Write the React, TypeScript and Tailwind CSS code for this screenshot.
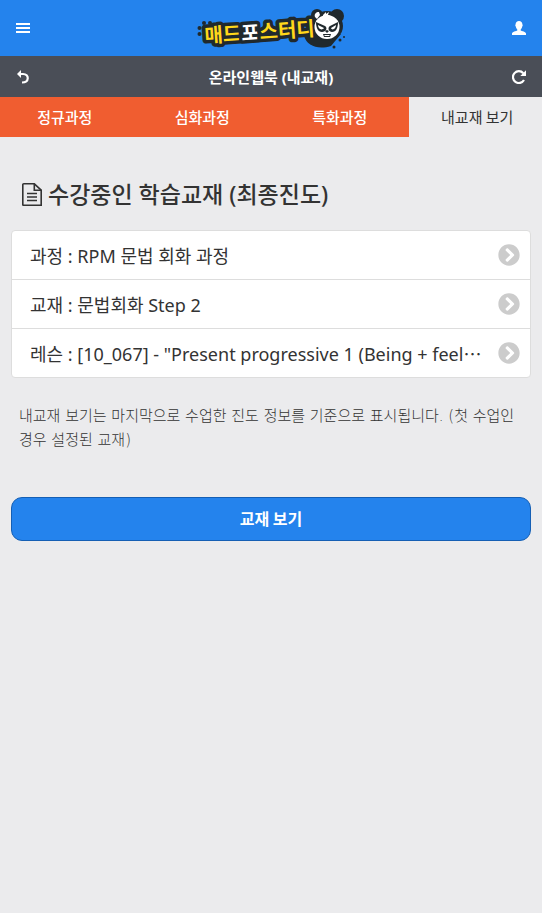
import { FaChevronCircleRight } from "react-icons/fa";

const tabs = ["정규과정", "심화과정", "특화과정", "내교재 보기"];
const rows = [
  "과정 : RPM 문법 회화 과정",
  "교재 : 문법회화 Step 2",
  '레슨 : [10_067] - "Present progressive 1 (Being + feeling adjectives)"',
];

function MenuIcon() {
  return (
    <svg viewBox="0 0 14 10" className="h-[10px] w-[14px]" fill="currentColor" aria-hidden="true">
      <rect width="14" height="2" />
      <rect y="4" width="14" height="2" />
      <rect y="8" width="14" height="2" />
    </svg>
  );
}

function UserIcon() {
  return (
    <svg viewBox="0 0 14 14" className="size-3.5" fill="currentColor" aria-hidden="true">
      <path d="M7 0C9 0 10.4 1.4 10.4 3.6c.5.2.4 1.5-.2 1.8-.2 1.4-.9 2.4-1.5 3v1.1c1 .7 5.3 1.3 5.3 3V14H0v-1.5c0-1.7 4.3-2.3 5.300-3V8.400c-.6-.6-1.300-1.600-1.500-3-.6-.3-.7-1.600-.2-1.800C3.600 1.400 5 0 7 0Z" />
    </svg>
  );
}

function BackIcon() {
  return (
    <svg viewBox="0 0 14 14" className="size-3.5" fill="none" aria-hidden="true">
      <path d="M5 0v8L1 4Z" fill="currentColor" />
      <path d="M3 4h4c6.500 0 6.500 8.500-1 8.500" stroke="currentColor" strokeWidth="2.200" />
    </svg>
  );
}

function ReloadIcon() {
  return (
    <svg viewBox="0 0 14 14" className="size-3.5" fill="none" aria-hidden="true">
      <path d="M11.300 3.200A5.900 5.900 0 1 0 12 10" stroke="currentColor" strokeWidth="2.200" />
      <path d="M14 .3V6H8.300Z" fill="currentColor" />
    </svg>
  );
}

function FileIcon() {
  return (
    <svg viewBox="0 0 20 23" className="h-[23px] w-5 shrink-0" fill="none" stroke="currentColor" strokeWidth="1.600" aria-hidden="true">
      <path d="M1.800.8h10.500l6.900 6.400v15H1.200a.4.4 0 0 1-.4-.4V1.800a1 1 0 0 1 1-1Z" />
      <path d="M12.300.8v6.400h6.900M5 10.500h10M5 14h10M5 17.500h10" />
    </svg>
  );
}

function Logo() {
  return (
    <svg viewBox="0 0 150 44" className="h-11 w-[150px]" role="img" aria-label="매드포스터디">
      <g fill="#20292d">
        <circle cx="8" cy="17" r="2" />
        <circle cx="14" cy="17" r="2" />
        <circle cx="3.500" cy="22" r="2" />
        <circle cx="3.500" cy="28" r="2" />
        <path d="M108 30c3 10 14 14 27 10l10-12Z" />
        <circle cx="121" cy="9" r="6" />
        <circle cx="141" cy="10" r="7" />
        <ellipse cx="131" cy="20" rx="16" ry="15" />
        <circle cx="144" cy="34" r="1.500" />
        <circle cx="148" cy="31" r="1" />
        <circle cx="138" cy="41" r="1.500" />
      </g>
      <g
        className="font-['Noto_Sans_CJK_KR','Noto_Sans_CJK_SC',sans-serif] text-[20px] font-bold"
        fill="#ffd71a"
        stroke="#20292d"
        strokeWidth="7"
        strokeLinejoin="round"
        paintOrder="stroke"
        transform="rotate(-4 10 37)"
      >
        <text x="9" y="37">
          매드<tspan fill="#ffffff">포</tspan>스터디
        </text>
      </g>
      <path d="M119 11c-1-3 1-5 4-5l1 3-3 4ZM127 9l3-3v2l3-2-1 3 3 1-8 1Z" fill="#fff" />
      <ellipse cx="131" cy="21" rx="12.500" ry="12" fill="#fff" />
      <g fill="#20292d">
        <path d="m120 16 9 4c3 2 1 6-3 6-4 0-6-4-6-10ZM142 16l-8 4c-3 2-1 6 2 6 4 0 6-4 6-10Z" />
        <path d="m129 25 2-1 2 1-2 2Z" />
        <path d="M127 28h8l-1 3h-6Z" />
      </g>
      <g fill="#fff">
        <path d="m122 19 6 3c-2 3-6 1-6-3ZM140 19l-5 3c1 3 5 1 5-3Z" />
        <path d="M128 29h6l-1 1h-4Z" />
      </g>
    </svg>
  );
}

export default function App() {
  return (
    <div className="min-h-screen bg-[#ebebed] font-['Noto_Sans_CJK_KR','Noto_Sans_CJK_SC',sans-serif] text-[#333]">
      <header className="flex h-14 items-center justify-between bg-[#2483ed] px-4 text-white">
        <button type="button" aria-label="메뉴" className="w-3.5">
          <MenuIcon />
        </button>
        <a href="#home">
          <Logo />
        </a>
        <button type="button" aria-label="내 정보" className="w-3.5">
          <UserIcon />
        </button>
      </header>
      <div className="flex h-[41px] items-center justify-between bg-[#4a4e57] px-4 text-white">
        <button type="button" aria-label="뒤로">
          <BackIcon />
        </button>
        <h1 className="font-['Noto_Sans','Noto_Sans_CJK_KR',sans-serif] text-[15px] leading-6 font-bold">온라인웹북 (내교재)</h1>
        <button type="button" aria-label="새로고침">
          <ReloadIcon />
        </button>
      </div>
      <div className="overflow-hidden">
        <nav className="-mx-1 flex h-10 bg-[#f05d30] text-[15px]">
          {tabs.map((tab, i) => (
            <a
              key={tab}
              href="#tab"
              aria-current={i === 3 ? "page" : undefined}
              className={
                i === 3
                  ? "flex flex-1 items-center justify-center bg-[#ebebed]"
                  : "flex flex-1 items-center justify-center font-medium text-white"
              }
            >
              {tab}
            </a>
          ))}
        </nav>
      </div>
      <main className="px-[11px] pt-10">
        <h2 className="flex items-center gap-1.5 pl-[11px] font-['Noto_Sans','Noto_Sans_CJK_KR',sans-serif] text-[23px] leading-[34px] font-medium">
          <FileIcon />
          수강중인 학습교재 (최종진도)
        </h2>
        <ul className="mt-[19px] divide-y divide-[#ddd] rounded-[4px] border border-[#ddd] bg-white">
          {rows.map((row) => (
            <li key={row}>
              <a href="#book" className="flex h-12 items-center justify-between gap-3 pr-2.5 pl-[18px] text-lg">
                <span className="truncate">
                  <span className="font-['Noto_Sans','Noto_Sans_CJK_KR',sans-serif]">{row}</span>
                </span>
                <FaChevronCircleRight className="size-[22px] shrink-0 text-[#ccc]" aria-hidden="true" />
              </a>
            </li>
          ))}
        </ul>
        <p className="mt-[26px] px-2 font-['DejaVu_Sans_Light','DejaVu_Sans','Noto_Sans_CJK_KR',sans-serif] text-[15px] leading-6 font-light break-keep">
          내교재 보기는 마지막으로 수업한 진도 정보를 기준으로 표시됩니다. (첫 수업인 경우 설정된 교재)
        </p>
        <button
          type="button"
          className="mt-[45px] h-11 w-full rounded-[11px] border border-[#155fb4] bg-[#2483ed] pb-0.5 text-base font-bold text-white"
        >
          교재 보기
        </button>
      </main>
    </div>
  );
}
